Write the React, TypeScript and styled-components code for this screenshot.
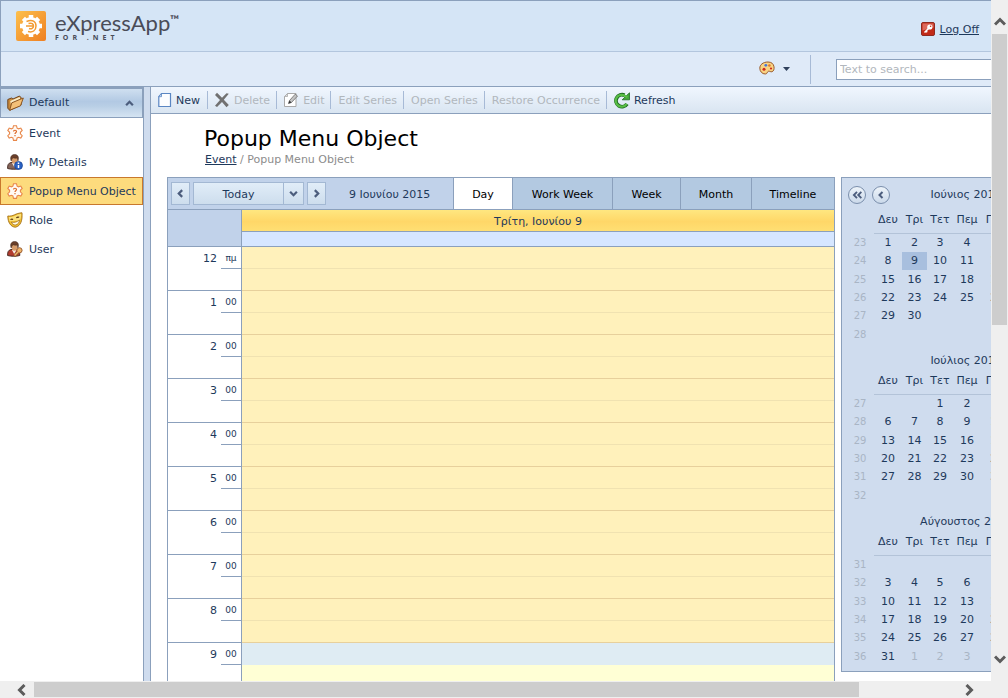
import React from 'react';
import styled, { createGlobalStyle, css } from 'styled-components';

const c = {
  line: '#8ba0bc',
  text: '#1e395b',
  disabled: '#b1b7bd',
  panel: '#cfdcee',
};

const GlobalStyle = createGlobalStyle`
  *, *::before, *::after { box-sizing: border-box; }
  body {
    margin: 0;
    background: #fff;
    color: ${c.text};
    font: 11px/16px "DejaVu Sans", Verdana, sans-serif;
  }
  button, input { font: inherit; color: inherit; }
  button { margin: 0; padding: 0; border: 0; background: none; cursor: pointer; }
  button:disabled { cursor: default; }
  svg { display: block; flex: none; }
`;

/* Text that stands beside an icon, seated slightly below the icon's middle. */
const Label = styled.span`
  padding-top: 2px;
`;

/* ---------- Window and scroll bars ---------- */

const Shell = styled.div`
  display: grid;
  grid-template: minmax(0, 1fr) 17px / minmax(0, 1fr) 17px;
  height: 100vh;
  background: #efefef;
`;

const Viewport = styled.div`
  display: flex;
  flex-direction: column;
  overflow: hidden;
  background: #fff;
`;

const ScrollTrack = styled.div<{ $vertical?: boolean }>`
  display: flex;
  flex-direction: ${(p) => (p.$vertical ? 'column' : 'row')};
  padding: 1px;
`;

const ScrollButton = styled.button<{ $vertical?: boolean }>`
  display: flex;
  align-items: center;
  justify-content: center;
  flex: none;
  ${(p) => (p.$vertical ? 'height: 33px; padding-top: 8px;' : 'width: 33px; padding-left: 8px;')}
  &:last-child {
    ${(p) => (p.$vertical ? 'padding: 0 0 10px;' : 'padding: 0 10px 0 0;')}
  }
`;

const ScrollSpace = styled.div<{ $thumb: string }>`
  flex: 1;
  display: flex;
  flex-direction: inherit;
  &::before {
    content: '';
    flex: 0 0 ${(p) => p.$thumb};
    background: #cdcdcd;
  }
`;

/* ---------- Header ---------- */

const Header = styled.header`
  flex: none;
  border: solid ${c.line};
  border-width: 1px 0 1px 1px;
`;

const Brand = styled.div`
  display: flex;
  align-items: center;
  justify-content: space-between;
  height: 51px;
  padding: 0 12px 0 15px;
  background: #d5e5f6;
  border-bottom: 1px solid #b3c6de;
`;

const Logo = styled.a`
  display: flex;
  gap: 9px;
  color: #4a4c58;
  text-decoration: none;
`;

const LogoText = styled.span`
  display: flex;
  flex-direction: column;
`;

const LogoName = styled.span`
  display: flex;
  align-items: flex-start;
  font: 22px/24px Lato, sans-serif;
`;

const TradeMark = styled.span`
  font: bold 12px/18px Lato, sans-serif;
`;

const LogoSub = styled.span`
  font: bold 7px/6px "Open Sans", sans-serif;
  letter-spacing: 4px;
`;

const LogOff = styled.a`
  display: flex;
  align-items: center;
  gap: 5px;
  padding-top: 6px;
  color: ${c.text};
`;

const SearchRow = styled.div`
  display: flex;
  align-items: center;
  justify-content: flex-end;
  width: calc(100% + 117px);
  height: 34px;
  padding: 0 10px;
  background: #dfeaf8;
`;

const ThemeButton = styled.button`
  display: flex;
  align-items: center;
  gap: 8px;
  padding-right: 20px;
  margin-right: 25px;
  height: 29px;
  border-right: 1px solid #a7bad6;
`;

const SearchBox = styled.input`
  width: 262px;
  height: 21px;
  padding: 0 3px;
  border: 1px solid ${c.line};
  border-radius: 0;
  background: #fff;
  &::placeholder { color: #b2b7bd; opacity: 1; }
`;

/* ---------- Sidebar ---------- */

const Body = styled.div`
  display: flex;
  flex: 1;
  min-height: 0;
  width: calc(100% + 117px);
`;

const Sidebar = styled.nav`
  flex: 0 0 143px;
`;

const GroupButton = styled.button`
  display: flex;
  align-items: center;
  gap: 5px;
  width: 100%;
  height: 31px;
  padding: 0 8px 0 6px;
  border: 1px solid ${c.line};
  border-top-width: 2px;
  background: linear-gradient(#cfdff0, #b2c9e3 45%, #b8cee5 60%, #d5e4f2);
  text-align: left;
`;

const GroupLabel = styled.span`
  flex: 1;
`;

const NavList = styled.ul`
  display: grid;
  margin: 0;
  padding: 1px 0;
  list-style: none;
`;

const NavLink = styled.a<{ $active?: boolean }>`
  display: flex;
  align-items: center;
  gap: 6px;
  height: 28px;
  margin-bottom: 1px;
  padding-left: 6px;
  border: 1px solid transparent;
  color: ${c.text};
  text-decoration: none;
  white-space: nowrap;
  ${(p) =>
    p.$active &&
    css`
      border-color: #c8782d;
      background: #fddb7d;
    `}
`;

const Splitter = styled.div`
  flex: 0 0 8px;
  border: solid ${c.line};
  border-width: 0 1px;
  background: ${c.panel};
`;

/* ---------- Main area ---------- */

const Main = styled.main`
  flex: 1;
  min-width: 0;
`;

const Toolbar = styled.div`
  display: flex;
  align-items: center;
  height: 27px;
  border-bottom: 1px solid ${c.line};
  background: linear-gradient(#f0f6fe, #d9e5f1);
`;

const Tool = styled.button<{ $plain?: boolean }>`
  display: flex;
  align-items: center;
  gap: 4px;
  height: 18px;
  padding: 0 6px 0 ${(p) => (p.$plain ? 7 : 6)}px;
  white-space: nowrap;
  &:first-child { padding-right: 7px; }
  & + & { border-left: 1px solid #a7bad6; }
  &:disabled { color: ${c.disabled}; }
`;

const Heading = styled.div`
  padding: 12px 0 9px 53px;
`;

const Title = styled.h1`
  margin: 0;
  color: #000;
  font-size: 22px;
  line-height: 26px;
  font-weight: 400;
`;

const Breadcrumb = styled.div`
  padding-left: 1px;
  color: #8c8c8c;
  a { color: ${c.text}; }
`;

const Workspace = styled.div`
  display: flex;
  align-items: flex-start;
  gap: 6px;
  padding: 0 17px 0 16px;
`;

/* ---------- Scheduler ---------- */

const Scheduler = styled.section`
  flex: 1;
  min-width: 0;
  border: 1px solid ${c.line};
`;

const ViewBar = styled.div`
  display: flex;
  align-items: center;
  height: 32px;
  border-bottom: 1px solid ${c.line};
  background: #c1d2ea;
`;

const NavButtons = styled.div`
  display: flex;
  gap: 3px;
  padding-left: 3px;
`;

const softButton = css`
  display: flex;
  align-items: center;
  justify-content: center;
  height: 23px;
  border: 1px solid #a3b8d3;
  background: linear-gradient(#e1edf8, #cddded);
`;

const StepButton = styled.button`
  ${softButton}
  width: 19px;
`;

const SplitButton = styled.div`
  display: flex;
`;

const TodayButton = styled.button`
  ${softButton}
  width: 90px;
  padding-top: 2px;
  border-right: 0;
`;

const MoreButton = styled.button`
  ${softButton}
  width: 21px;
`;

const CurrentDate = styled.span`
  flex: 1;
  padding: 2px 0 0 23px;
`;

const ViewTab = styled.button<{ $active?: boolean; $width: number }>`
  align-self: stretch;
  width: ${(p) => p.$width}px;
  padding-top: 2px;
  border-left: 1px solid ${c.line};
  background: ${(p) => (p.$active ? '#fff' : '#b3c9e1')};
  color: #000;
`;

const DayHead = styled.div`
  display: grid;
  grid-template-columns: 74px 1fr;
  background: #c1d2ea;
`;

const HeadCorner = styled.div`
  border: solid ${c.line};
  border-width: 0 1px 1px 0;
`;

const DateHeader = styled.div`
  height: 22px;
  padding-top: 4px;
  border-bottom: 1px solid ${c.line};
  background: linear-gradient(#ffe780, #ffd768 55%, #ffdf73);
  text-align: center;
`;

const AllDay = styled.div`
  height: 15px;
  border-bottom: 1px solid ${c.line};
  background: #d6e6ff;
`;

const HourRow = styled.div`
  display: grid;
  grid-template-columns: 53px 21px 1fr;
  height: 44px;
`;

const Hour = styled.div`
  padding: 4px 4px 0 0;
  border-bottom: 1px solid ${c.line};
  text-align: right;
`;

const Minute = styled.div`
  border: solid ${c.line};
  border-width: 0 1px 1px 0;
  text-align: center;
  span {
    display: block;
    height: 22px;
    padding-top: 4px;
    border-bottom: 1px solid ${c.line};
    font-size: 9px;
    line-height: 14px;
  }
`;

const Slots = styled.div<{ $work?: boolean }>`
  display: grid;
  grid-template-rows: 22px 22px;
  background: ${(p) => (p.$work ? '#ffffd5' : '#fff1bb')};
  div { border-bottom: 1px solid ${(p) => (p.$work ? 'transparent' : '#f0e2b1')}; }
  div:last-child { border-color: #e7d09c; }
  div:first-child { background: ${(p) => (p.$work ? '#dfecf3' : 'none')}; }
`;

/* ---------- Date navigator ---------- */

const DateNavigator = styled.aside`
  flex: 0 0 250px;
  padding: 5px 0;
  border: 1px solid ${c.line};
  background: ${c.panel};
`;

const Month = styled.section`
  & + & { padding-top: 10px; }
`;

const MonthHead = styled.div<{ $tall?: boolean }>`
  display: grid;
  grid-template-columns: 1fr auto 1fr;
  align-items: center;
  height: ${(p) => (p.$tall ? 24 : 14)}px;
  padding: 0 6px;
`;

const MonthTitle = styled.h2`
  grid-column: 2;
  margin: 0;
  font-size: 11px;
  line-height: 14px;
  font-weight: 400;
`;

const MonthSteps = styled.div`
  display: flex;
  gap: 6px;
  grid-row: 1;
`;

const RoundButton = styled.button`
  display: flex;
  align-items: center;
  justify-content: center;
  width: 18px;
  height: 18px;
  border: 1px solid #7b8fac;
  border-radius: 50%;
  background: linear-gradient(#eef4fa, #cbd9ea);
`;

const Days = styled.table`
  table-layout: fixed;
  width: 221px;
  border-collapse: separate;
  border-spacing: 0;
  text-align: center;
  th, td { padding: 0; font-weight: 400; line-height: 16px; }
  thead th { height: 27px; }
  thead th + th { border-bottom: 1px solid #b3c3d8; }
  tbody tr { height: 18px; }
  tbody tr:nth-child(3n) { height: 19px; }
  tbody th { padding-left: 4px; color: #a9b5c5; font-size: 10px; }
`;

const Day = styled.td<{ $selected?: boolean; $other?: boolean }>`
  color: ${(p) => (p.$other ? '#a9b5c5' : c.text)};
  background: ${(p) => (p.$selected ? '#a8bfde' : 'transparent')};
`;

/* ---------- Icons ---------- */

type Direction = 'left' | 'right' | 'up' | 'down';
const turns: Record<Direction, number> = { left: 0, up: 90, right: 180, down: 270 };

const Chevron = ({ dir, size = 9, double = false, color = '#4c5d7d', weight = 2 }: {
  dir: Direction; size?: number; double?: boolean; color?: string; weight?: number;
}) => (
  <svg width={size} height={size} viewBox="0 0 8 8" fill="none" stroke={color} strokeWidth={weight} aria-hidden="true">
    <g transform={`rotate(${turns[dir]} 4 4)`}>
      {double ? <path d="M4 1.500 1.500 4 4 6.500M7.500 1.500 5 4l2.500 2.500" /> : <path d="M5.5 1 2.5 4l3 3" />}
    </g>
  </svg>
);

const ScrollArrow = ({ dir }: { dir: Direction }) => (
  <svg width="12" height="12" viewBox="0 0 12 12" fill="none" stroke="#5c5c5c" strokeWidth="3" aria-hidden="true">
    <path d="M8.5 1 3.5 6l5 5" transform={`rotate(${turns[dir]} 6 6)`} />
  </svg>
);

const LogoMark = () => (
  <svg width="30" height="30" viewBox="0 0 30 30" aria-hidden="true">
    <defs>
      <linearGradient id="mark" x1="0" y1="0" x2="1" y2="1">
        <stop offset="0" stopColor="#fdc04c" />
        <stop offset="1" stopColor="#ee7f22" />
      </linearGradient>
    </defs>
    <rect width="30" height="30" rx="2" fill="url(#mark)" />
    <circle cx="15" cy="15" r="9" fill="#fff" />
    <path d="M15 4v22M4 15h22M7.400 7.400l15.200 15.200M22.600 7.400 7.400 22.600" stroke="#fff" strokeWidth="4.500" />
    <path d="M10.500 10.500c6-2.500 9.500 0 9.500 4.500s-3.500 7-8 5.500M12.500 12.500c3.500-1 5 .5 5 2.500s-2 3.500-4.500 2.500M10 15h7" fill="none" stroke="#f29b32" strokeWidth="1.500" />
  </svg>
);

const KeyIcon = () => (
  <svg width="14" height="14" viewBox="0 0 14 14" aria-hidden="true">
    <rect x=".5" y=".5" width="13" height="13" rx="1.5" fill="#c22a17" stroke="#8f2a20" />
    <path d="M1.500 1.500h11v4l-11 3z" fill="#dc6a5c" />
    <circle cx="8.800" cy="5" r="2.600" fill="#fff" />
    <circle cx="9.600" cy="4.200" r=".8" fill="#c22a17" />
    <path d="m7.500 6.500-4 4M5 9l1.200 1.200" stroke="#fff" strokeWidth="1.600" />
  </svg>
);

const PaletteIcon = () => (
  <svg width="16" height="16" viewBox="0 0 16 16" aria-hidden="true">
    <path d="M9 1C4 1 .8 3.700.8 7.200.8 10.500 3.200 13 6.300 13c2.200 0 1.700-2.300 3-2.700 1.400-.5 2.300 1 3.800.4C14.800 10 15.300 8 15 5.800 14.500 2.800 12.500 1 9 1z" fill="#f9d384" stroke="#9a5a2c" />
    <circle cx="5" cy="8.200" r="1.500" fill="#cf2a1c" />
    <circle cx="6.800" cy="4.300" r="1.400" fill="#4877d8" />
    <circle cx="10.400" cy="4.500" r="1.300" fill="#e07b28" />
    <circle cx="12" cy="7.500" r="1.100" fill="#cf2a1c" />
  </svg>
);

const FolderIcon = () => (
  <svg width="17" height="16" viewBox="0 0 17 16" strokeLinejoin="round" aria-hidden="true">
    <path d="M.8 4.500 4.500 3 6 4l6.500-3L14 2.500V10L3 15.200.8 13.500z" fill="#c98a3c" stroke="#70441c" />
    <path d="m3.200 6 9.300-4 1 2.500-9 7.500z" fill="#f9ebc6" />
    <path d="m2.600 15.300 2.200-7.500L16.300 3l-2.800 7.800z" fill="#f3c078" stroke="#8a5420" />
  </svg>
);

const StarIcon = () => (
  <svg width="16" height="16" viewBox="0 0 16 16" aria-hidden="true">
    <path d="M6.500.7h3l.6 2.500 1.500.6 2.200-.7 1.400 2.300-1.800 1.900v1.500l1.800 1.900-1.400 2.300-2.200-.7-1.500.6-.6 2.500h-3l-.6-2.500-1.500-.6-2.200.7-1.400-2.300 1.800-1.900V7.300L.8 5.400l1.400-2.300 2.200.7 1.500-.6z" fill="#fffaf5" stroke="#e8874a" strokeWidth="1.100" />
    <path d="M6.500 6.500c0-1.700 3-1.700 3 0 0 1.200-1.500 1.200-1.500 2.400M8 10v1.300" fill="none" stroke="#dd6b2a" strokeWidth="1.200" />
  </svg>
);

const PersonBase = ({ coat }: { coat: string }) => (
  <>
    <path d="M.6 14.500c-.2-3.500.8-5.500 3.400-6h5c2.800.5 4 2.500 3.800 6-3 1-9 1-12.200 0z" fill={coat} stroke="#3d241c" strokeWidth=".9" />
    <path d="m5 9 2.200 4L9.500 9z" fill="#f5ede6" />
    <ellipse cx="7.500" cy="5.500" rx="3" ry="4.300" fill="#d79c6a" />
    <path d="M4.200 7C2.600 3 4.600.5 7.600.5c3.200 0 4.800 2.600 3.300 6.500-.2-1.500-.5-2.500-1.200-3-1.500.4-2.700.2-3.700-.3C5 4.500 4.600 5.500 4.200 7z" fill="#6a3f29" stroke="#3d241c" strokeWidth=".5" />
  </>
);

const DetailsIcon = () => (
  <svg width="16" height="16" viewBox="0 0 16 16" aria-hidden="true">
    <PersonBase coat="#84655a" />
    <circle cx="11.500" cy="11.500" r="4" fill="#2a62c4" stroke="#17408d" strokeWidth=".7" />
    <path d="M11.500 11v3M11.500 8.500V10" stroke="#fff" strokeWidth="1.500" />
  </svg>
);

const UserIcon = () => (
  <svg width="16" height="16" viewBox="0 0 16 16" aria-hidden="true">
    <PersonBase coat="#b23c30" />
    <circle cx="12.500" cy="9.300" r="2.600" fill="#efb56c" stroke="#94562a" strokeWidth=".9" />
    <path d="m11.300 11-4 4" stroke="#94562a" strokeWidth="2.800" />
    <path d="m11.500 10.500-3.900 4" stroke="#efb56c" strokeWidth="1.400" />
  </svg>
);

const RoleIcon = () => (
  <svg width="16" height="16" viewBox="0 0 16 16" aria-hidden="true">
    <path d="M.8 4c2.500.3 4.700-.2 6.700-1.200 2-1 4.500-1.800 7.500-2C15.500 8 14 14 8.500 15.200 3.500 15 .8 10 .8 4z" fill="#f0bd2b" stroke="#a4701c" strokeWidth=".9" />
    <path d="M1.800 5c2.500.2 4.500-.3 6.300-1.300 1.800-1 3.800-1.600 6-1.900.1 3-.4 5-1.300 6.200C9 9 5 9.500 2.500 9z" fill="#fbe07a" />
    <path d="M3.500 7.700c.8-.7 1.700-.8 2.600-.3M9.300 6c.8-.9 1.900-1.100 2.900-.7" fill="none" stroke="#5b3410" strokeWidth="1.100" />
    <path d="M4.300 10c2.700.9 5.400.2 8.200-2-.3 2.900-1.700 4.500-3.800 4.900-2 .2-3.500-.8-4.400-2.900z" fill="#fffbe4" stroke="#9c6518" strokeWidth=".7" />
  </svg>
);

const NewIcon = () => (
  <svg width="15" height="16" viewBox="0 0 15 16" aria-hidden="true">
    <path d="M4.500 1.500h9v13H1.800V4.700z" fill="#fcfdff" stroke="#5a86c3" strokeWidth="1.200" />
    <path d="M4.500 1.500v3.200H1.800z" fill="#dce8f8" stroke="#5a86c3" strokeWidth=".8" />
  </svg>
);

const DeleteIcon = () => (
  <svg width="16" height="16" viewBox="0 0 16 16" fill="#717171" aria-hidden="true">
    <path d="M3 .8 8 5.800l4.500-4.600 2.300.6L9.800 7.800l5 5.200-2.300 2.200L8 10l-5 5-2-1.200L6 8 1 3z" />
  </svg>
);

const EditIcon = () => (
  <svg width="16" height="16" viewBox="0 0 16 16" aria-hidden="true">
    <path d="M4.500 1.500h8.500v13H1.500V4.500z" fill="#fff" stroke="#a9a9a9" />
    <path d="M4.500 1.500v3h-3z" fill="#ddd" stroke="#a9a9a9" strokeWidth=".8" />
    <path d="m5.500 11.500 1-3 5.700-6.300L14.500 4 8.500 10.500z" fill="#c4c4c4" stroke="#6b6b6b" strokeWidth=".8" />
    <path d="m5.500 11.500 1-3 2 2z" fill="#333" />
  </svg>
);

const RefreshIcon = () => (
  <svg width="17" height="17" viewBox="0 0 17 17" aria-hidden="true">
    <path d="M14 12A6 6 0 1 1 11.500 3.200" fill="none" stroke="#1e6b22" strokeWidth="3.800" />
    <path d="M16.500.8v7H9.200z" fill="#44a83a" stroke="#1e6b22" strokeWidth=".8" />
    <path d="M13.600 11.800A5.900 5.900 0 1 1 11.700 3.700L14.500 5" fill="none" stroke="#58bd45" strokeWidth="2.200" />
  </svg>
);

/* ---------- Data ---------- */

const navItems = [
  { label: 'Event', icon: <StarIcon /> },
  { label: 'My Details', icon: <DetailsIcon /> },
  { label: 'Popup Menu Object', icon: <StarIcon />, active: true },
  { label: 'Role', icon: <RoleIcon /> },
  { label: 'User', icon: <UserIcon /> },
];

const tools = [
  { label: 'New', icon: <NewIcon />, enabled: true },
  { label: 'Delete', icon: <DeleteIcon /> },
  { label: 'Edit', icon: <EditIcon /> },
  { label: 'Edit Series' },
  { label: 'Open Series' },
  { label: 'Restore Occurrence' },
  { label: 'Refresh', icon: <RefreshIcon />, enabled: true },
];

const views = [
  { label: 'Day', width: 59 },
  { label: 'Work Week', width: 100 },
  { label: 'Week', width: 68 },
  { label: 'Month', width: 71 },
  { label: 'Timeline', width: 83 },
];

const weekdays = ['Δευ', 'Τρι', 'Τετ', 'Πεμ', 'Παρ', 'Σαβ', 'Κυρ'];
const dayWidths = [28, 25, 26, 28, 32, 25, 25];

type MonthData = { title: string; firstWeek: number; offset: number; days: number; spill?: number };

const months: MonthData[] = [
  { title: 'Ιούνιος 2015', firstWeek: 23, offset: 0, days: 30 },
  { title: 'Ιούλιος 2015', firstWeek: 27, offset: 2, days: 31 },
  { title: 'Αύγουστος 2015', firstWeek: 31, offset: 5, days: 31, spill: 6 },
];

const MonthView = ({ month, first }: { month: MonthData; first: boolean }) => (
  <Month>
    <MonthHead $tall={first}>
      {first && (
        <MonthSteps>
          <RoundButton aria-label="Previous year"><Chevron dir="left" size={10} double weight={1.5} /></RoundButton>
          <RoundButton aria-label="Previous month"><Chevron dir="left" size={8} /></RoundButton>
        </MonthSteps>
      )}
      <MonthTitle>{month.title}</MonthTitle>
    </MonthHead>
    <Days>
      <colgroup>
        <col width={32} />
        {dayWidths.map((w, i) => <col key={i} width={w} />)}
      </colgroup>
      <thead>
        <tr>
          <th />
          {weekdays.map((d) => <th key={d} scope="col">{d}</th>)}
        </tr>
      </thead>
      <tbody>
        {[0, 1, 2, 3, 4, 5].map((w) => (
          <tr key={w}>
            <th scope="row">{month.firstWeek + w}</th>
            {weekdays.map((_, d) => {
              const n = w * 7 + d - month.offset + 1;
              const over = n - month.days;
              const other = over > 0 && over <= (month.spill ?? 0);
              return (
                <Day key={d} $other={other} $selected={first && n === 9}>
                  {other ? over : n > 0 && over <= 0 ? n : ''}
                </Day>
              );
            })}
          </tr>
        ))}
      </tbody>
    </Days>
  </Month>
);

export default function App() {
  return (
    <Shell>
      <GlobalStyle />
      <Viewport>
        <Header>
          <Brand>
            <Logo href="#">
              <LogoMark />
              <LogoText>
                <LogoName>eXpressApp<TradeMark>™</TradeMark></LogoName>
                <LogoSub>FOR .NET</LogoSub>
              </LogoText>
            </Logo>
            <LogOff href="#"><KeyIcon /><Label>Log Off</Label></LogOff>
          </Brand>
          <SearchRow>
            <ThemeButton aria-label="Theme">
              <PaletteIcon />
              <svg width="7" height="4" viewBox="0 0 7 4" aria-hidden="true"><path d="M0 0h7L3.500 4z" fill="#2f405c" /></svg>
            </ThemeButton>
            <SearchBox type="text" aria-label="Search" placeholder="Text to search..." />
          </SearchRow>
        </Header>
        <Body>
          <Sidebar>
            <GroupButton>
              <FolderIcon />
              <GroupLabel>Default</GroupLabel>
              <Chevron dir="up" />
            </GroupButton>
            <NavList>
              {navItems.map((item) => (
                <li key={item.label}>
                  <NavLink href="#" $active={item.active}>{item.icon}<Label>{item.label}</Label></NavLink>
                </li>
              ))}
            </NavList>
          </Sidebar>
          <Splitter />
          <Main>
            <Toolbar>
              {tools.map((t) => (
                <Tool key={t.label} disabled={!t.enabled} $plain={!t.icon}>{t.icon}<Label>{t.label}</Label></Tool>
              ))}
            </Toolbar>
            <Heading>
              <Title>Popup Menu Object</Title>
              <Breadcrumb><a href="#">Event</a> / Popup Menu Object</Breadcrumb>
            </Heading>
            <Workspace>
              <Scheduler>
                <ViewBar>
                  <NavButtons>
                    <StepButton aria-label="Previous day"><Chevron dir="left" /></StepButton>
                    <SplitButton>
                      <TodayButton>Today</TodayButton>
                      <MoreButton aria-label="Choose date"><Chevron dir="down" /></MoreButton>
                    </SplitButton>
                    <StepButton aria-label="Next day"><Chevron dir="right" /></StepButton>
                  </NavButtons>
                  <CurrentDate>9 Ιουνίου 2015</CurrentDate>
                  {views.map((v, i) => (
                    <ViewTab key={v.label} $active={i === 0} $width={v.width}>{v.label}</ViewTab>
                  ))}
                </ViewBar>
                <DayHead>
                  <HeadCorner />
                  <div>
                    <DateHeader>Τρίτη, Ιουνίου 9</DateHeader>
                    <AllDay />
                  </div>
                </DayHead>
                {[12, 1, 2, 3, 4, 5, 6, 7, 8, 9].map((h) => (
                  <HourRow key={h}>
                    <Hour>{h}</Hour>
                    <Minute><span>{h === 12 ? 'πμ' : '00'}</span></Minute>
                    <Slots $work={h === 9}><div /><div /></Slots>
                  </HourRow>
                ))}
              </Scheduler>
              <DateNavigator>
                {months.map((m, i) => <MonthView key={m.title} month={m} first={i === 0} />)}
              </DateNavigator>
            </Workspace>
          </Main>
        </Body>
      </Viewport>
      <ScrollTrack $vertical>
        <ScrollButton $vertical aria-label="Scroll up"><ScrollArrow dir="up" /></ScrollButton>
        <ScrollSpace $thumb="47.4%" />
        <ScrollButton $vertical aria-label="Scroll down"><ScrollArrow dir="down" /></ScrollButton>
      </ScrollTrack>
      <ScrollTrack>
        <ScrollButton aria-label="Scroll left"><ScrollArrow dir="left" /></ScrollButton>
        <ScrollSpace $thumb="89.4%" />
        <ScrollButton aria-label="Scroll right"><ScrollArrow dir="right" /></ScrollButton>
      </ScrollTrack>
    </Shell>
  );
}
